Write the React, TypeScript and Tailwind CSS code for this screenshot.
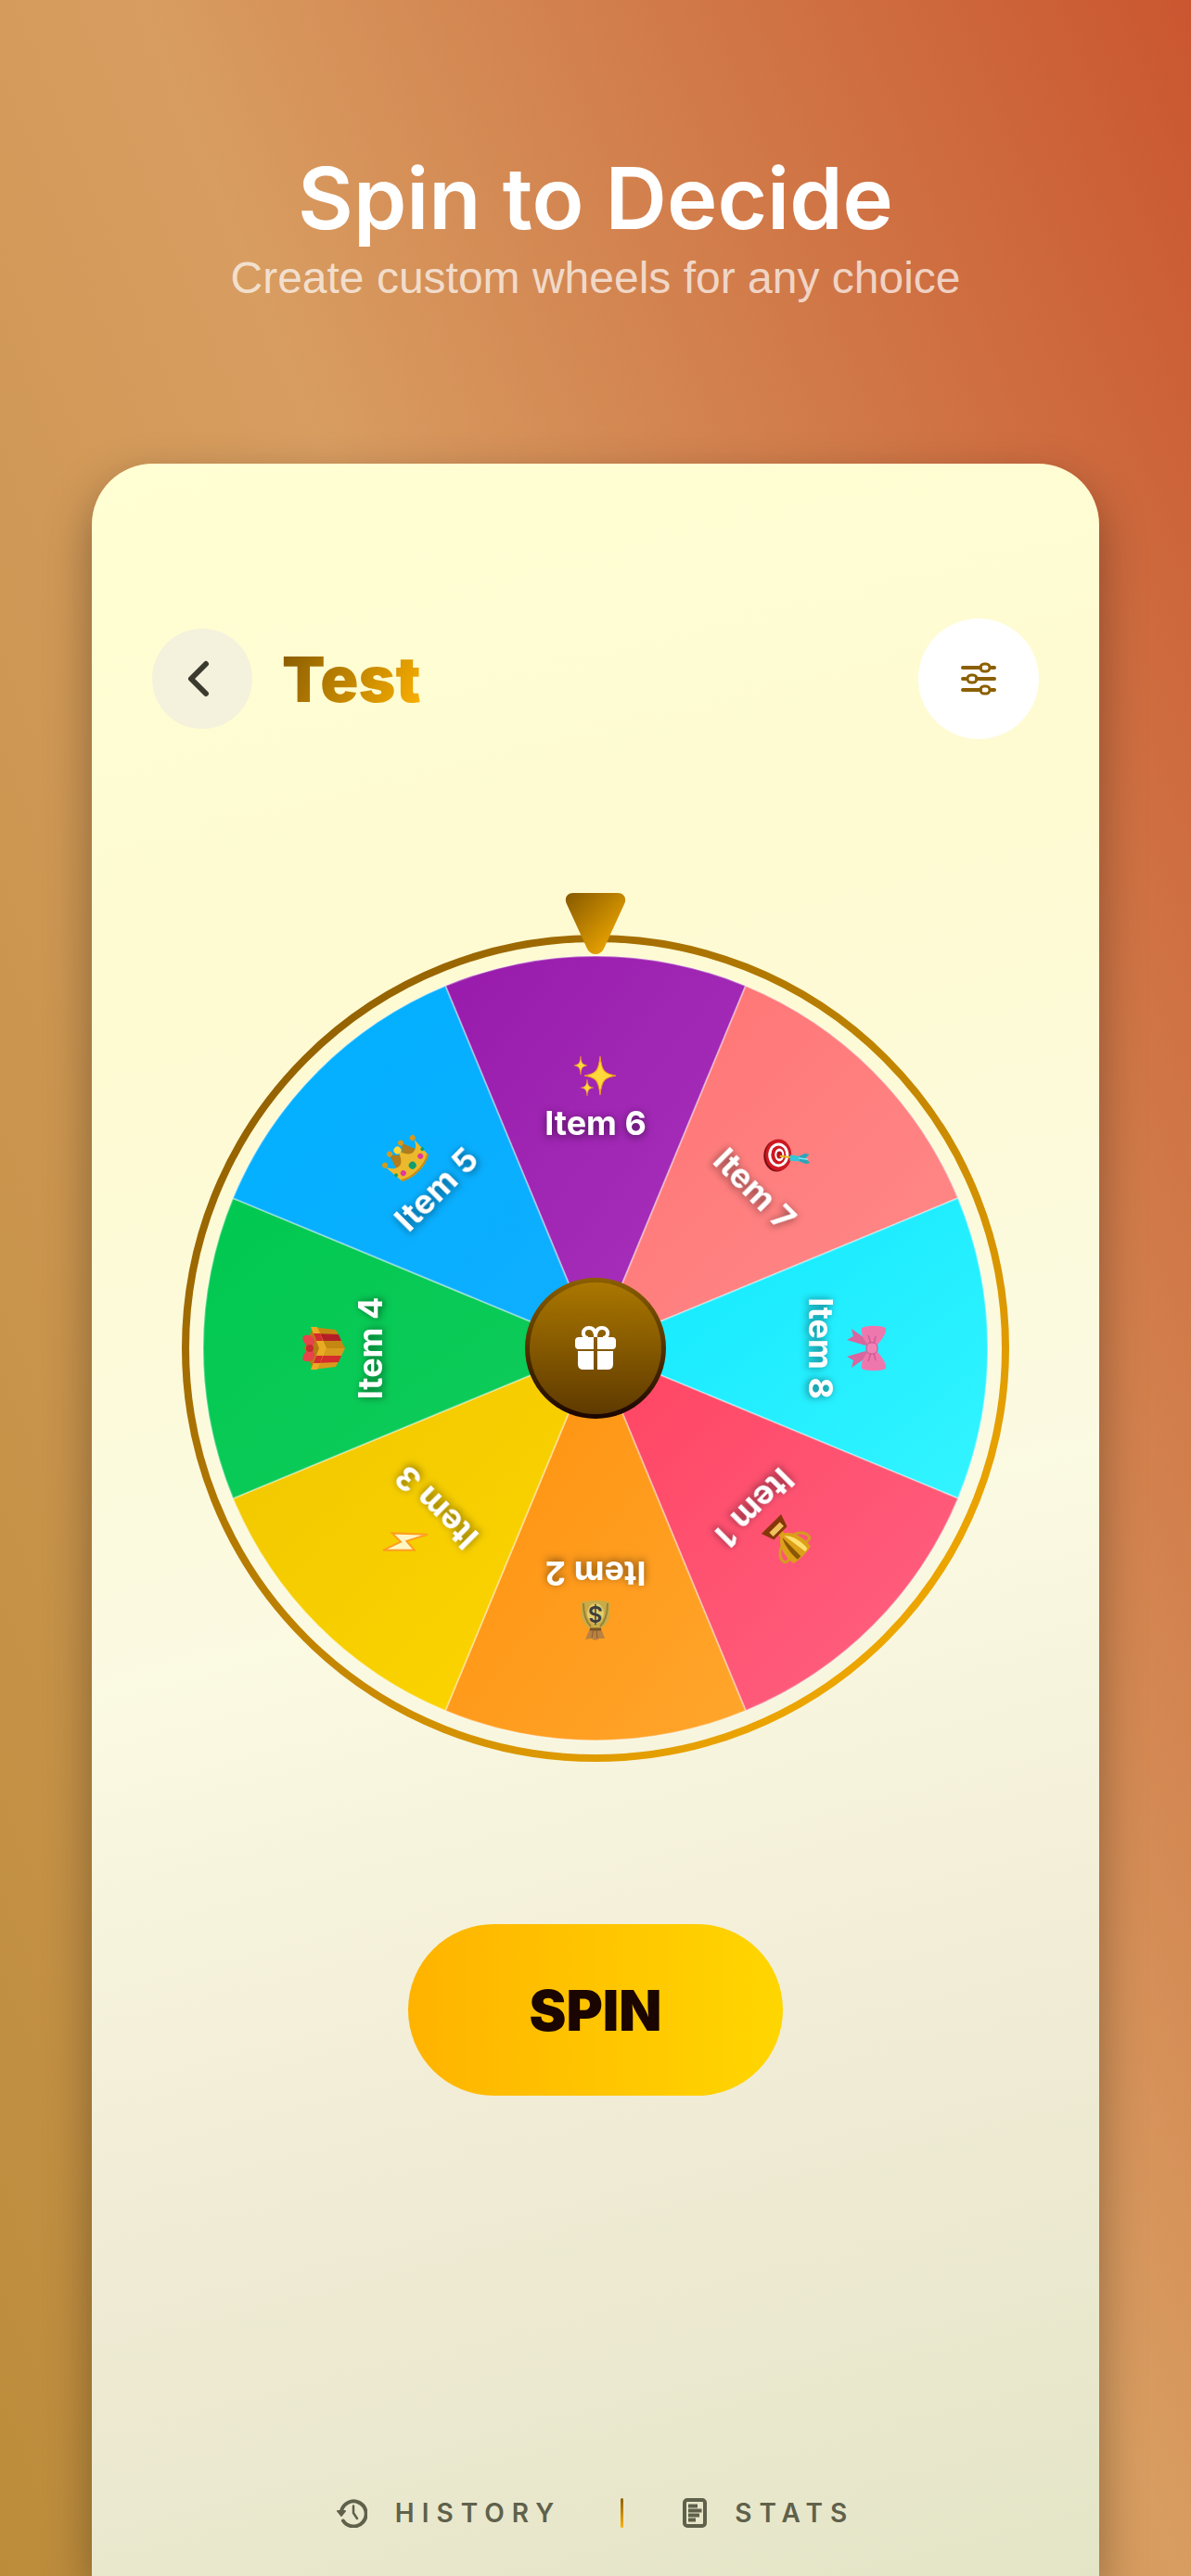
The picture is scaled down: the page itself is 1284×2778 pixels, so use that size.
import React from 'react';

type Segment = {
  label: string;
  from: string;
  to: string;
  icon: React.ReactNode;
};

const STAR = 'M0 -1 C0.1 -0.25 0.25 -0.1 1 0 C0.25 0.1 0.1 0.25 0 1 C-0.1 0.25 -0.25 0.1 -1 0 C-0.25 -0.1 -0.1 -0.25 0 -1 Z';

const Sparkles = () => (
  <g fill="#ffd93b" stroke="#f09a1e" strokeWidth="0.06">
    <path d={STAR} transform="translate(5 -1) scale(17 21)" />
    <path d={STAR} transform="translate(-16 -12) scale(7 10)" />
    <path d={STAR} transform="translate(-9 12) scale(7 9)" />
  </g>
);

const Target = () => (
  <g>
    <g transform="translate(-8 6) rotate(-45)">
      <ellipse cx="-2" cy="1" rx="14" ry="17" fill="#7d0f14" />
      <ellipse rx="14" ry="17" fill="#cf1820" />
      <ellipse rx="11" ry="13" fill="#fff" />
      <ellipse rx="8" ry="10" fill="#cf1820" />
      <ellipse cx="1" rx="5" ry="7" fill="#fff" />
      <ellipse cx="1" rx="3" ry="4" fill="#b3121a" />
    </g>
    <path d="M-6 6 L4 -2" stroke="#e8b21c" strokeWidth="2" />
    <path d="M1 -3 L5 2 L13 -5 L9 -9 Z" fill="#35c4d8" />
    <path d="M9 -9 L11 -15 L15 -18 L15 -12 L22 -12 L20 -8 L13 -5 Z" fill="#2aa5bb" />
    <path d="M10 -7 L18 -13" stroke="#83e6f0" strokeWidth="1.5" />
  </g>
);

const Bow = () => (
  <g>
    <path d="M-7 -3 L-21 17 L-13 15 L-9 22 L-3 2 Z" fill="#d9669e" />
    <path d="M7 -3 L21 17 L13 15 L9 22 L3 2 Z" fill="#d9669e" />
    <path d="M-4 -11 C-10 -16 -16 -21 -22 -20 C-25 -14 -25 0 -22 6 C-15 7 -9 4 -4 -1 Z" fill="#ee78ae" />
    <path d="M4 -11 C10 -16 16 -21 22 -20 C25 -14 25 0 22 6 C15 7 9 4 4 -1 Z" fill="#ee78ae" />
    <path d="M-5 -7 L-13 -9 M-5 -4 L-14 -1 M5 -7 L13 -9 M5 -4 L14 -1" stroke="#d05c95" strokeWidth="1.5" />
    <rect x="-6" y="-11" width="12" height="12" rx="5" fill="#f283b7" stroke="#c9548c" />
  </g>
);

const Trophy = () => (
  <g>
    <path d="M-11 -14 C-23 -21 -22 -4 -9 0 M11 -14 C23 -21 22 -4 9 0" fill="none" stroke="#d59b22" strokeWidth="3" />
    <path d="M-13 -22 C-7 -24 7 -24 13 -22 C15 -8 10 4 3 8 L3 12 H-3 L-3 8 C-10 4 -15 -8 -13 -22 Z" fill="#dca019" />
    <path d="M-9 -21 C-10 -8 -6 2 -1 6 L-5 -22 Z" fill="#ffe06d" />
    <path d="M2 -22 H7 C8 -9 5 1 2 6 Z" fill="#8b5702" />
    <path d="M-10 11 H10 L15 25 H-15 Z" fill="#863708" />
    <rect x="-8" y="14" width="16" height="6" fill="#eec15d" />
  </g>
);

const MoneyBag = () => (
  <g>
    <path d="M-10 -20 L-4 -20 L0 -22 L5 -20 L11 -21 L6 -9 H-6 Z" fill="#b98242" />
    <path d="M-2 -20 L-1 -9 M4 -19 L2 -9" stroke="#8e5d28" />
    <path d="M-6 -9 H6 C12 -5 15 -1 15 6 L16 18 C12 22 -12 22 -16 18 L-15 6 C-15 -1 -12 -5 -6 -9 Z" fill="#c9ac47" />
    <path d="M-5 -7 C-12 0 -13 9 -13 18 M5 -7 C12 0 13 9 13 18" fill="none" stroke="#9b8034" strokeWidth="2" />
    <ellipse cy="7" rx="9" ry="11" fill="#e2cd6c" />
    <path d="M-6 -10 H6" stroke="#7a5524" strokeWidth="3" />
    <text y="15" textAnchor="middle" fontSize="24" fontWeight="600" fill="#403c3c">$</text>
  </g>
);

const Bolt = () => (
  <path d="M-14 23 L14 -3 L1 -3 L8 -23 L-16 1 L-3 2 Z" fill="#fff6c4" stroke="#ff9d1e" strokeWidth="2" />
);

const GiftBox = () => (
  <g>
    <path d="M-22 -12 L0 -21 L22 -12 L0 -3 Z" fill="#b87a14" />
    <path d="M-23 -13 L0 -4 V23 L-20 13 Z" fill="#d89a1c" />
    <path d="M23 -13 L0 -4 V23 L20 13 Z" fill="#c48812" />
    <path d="M-16 -10 L-8 -7 V19 L-15 16 Z" fill="#d52a2e" />
    <path d="M16 -10 L8 -7 V19 L15 16 Z" fill="#b41f27" />
    <path d="M-23 -14 L0 -5 L23 -14 V-7 L0 3 L-23 -7 Z" fill="#e9ab23" />
    <path d="M-16 -11 L-8 -8 V-1 L-16 -4 Z M16 -11 L8 -8 V-1 L16 -4 Z" fill="#d52a2e" />
    <path d="M0 -15 C-6 -23 -13 -25 -14 -20 C-15 -13 -11 -9 -6 -10 L0 -13 L6 -10 C11 -9 15 -13 14 -20 C13 -25 6 -23 0 -15 Z" fill="#e6434a" />
    <circle cy="-15" r="4" fill="#c92932" />
  </g>
);

const Crown = () => (
  <g>
    <path d="M-17 10 L-10 -11 L0 -2 L9 -11 L17 10 Z" fill="#b07c1c" />
    <path d="M-20 18 L-22 -5 C-19 2 -13 6 -8 4 C-4 2 -2 -3 0 -8 C2 -3 4 2 8 4 C13 6 19 2 21 -5 L20 18 C10 25 -10 25 -20 18 Z" fill="#ecb92c" />
    <path d="M-20 17 C-10 24 10 24 20 17" fill="none" stroke="#c48b18" strokeWidth="2" />
    <g fill="#d49a1f">
      <circle cx="-21" cy="-7" r="3" />
      <circle cx="-9" cy="-12" r="3" />
      <circle cx="8" cy="-12" r="3" />
      <circle cx="21" cy="-7" r="3" />
    </g>
    <circle cy="-9" r="4" fill="#ffd836" />
    <circle cy="14" r="4" fill="#109f6c" />
    <circle cx="-13" cy="13" r="3" fill="#e0389f" />
    <circle cx="13" cy="13" r="3" fill="#e0389f" />
    <circle cx="-20" cy="9" r="2" fill="#109f6c" />
    <circle cx="20" cy="9" r="2" fill="#109f6c" />
  </g>
);

// Clockwise, starting with the segment under the pointer
const SEGMENTS: Segment[] = [
  { label: 'Item 6', from: '#981bab', to: '#a933be', icon: <Sparkles /> },
  { label: 'Item 7', from: '#ff7373', to: '#ff8a8a', icon: <Target /> },
  { label: 'Item 8', from: '#10e8ff', to: '#33f4ff', icon: <Bow /> },
  { label: 'Item 1', from: '#ff4462', to: '#ff6282', icon: <Trophy /> },
  { label: 'Item 2', from: '#ff900c', to: '#ffa62c', icon: <MoneyBag /> },
  { label: 'Item 3', from: '#f0c600', to: '#fdd600', icon: <Bolt /> },
  { label: 'Item 4', from: '#00c850', to: '#12cc5c', icon: <GiftBox /> },
  { label: 'Item 5', from: '#00b0ff', to: '#10aeff', icon: <Crown /> },
];

const RADIUS = 423;
const STEP = 360 / SEGMENTS.length;

const point = (deg: number) => {
  const rad = ((deg - 90) * Math.PI) / 180;
  return `${(RADIUS * Math.cos(rad)).toFixed(2)} ${(RADIUS * Math.sin(rad)).toFixed(2)}`;
};

const Wheel: React.FC = () => (
  <svg viewBox="-446 -491 892 937" className="block w-full font-['Inter',sans-serif]" role="img" aria-label="Prize wheel">
    <defs>
      <linearGradient id="ring" x1="0" y1="0" x2="1" y2="1">
        <stop offset="0" stopColor="#835500" />
        <stop offset="1" stopColor="#ffb300" />
      </linearGradient>
      <linearGradient id="pointer" x1="0" y1="0" x2="1" y2="1">
        <stop offset="0" stopColor="#855900" />
        <stop offset="1" stopColor="#ffb300" />
      </linearGradient>
      <linearGradient id="hub" x1="0" y1="0" x2="0" y2="1">
        <stop offset="0" stopColor="#aa7700" />
        <stop offset="1" stopColor="#5f3a00" />
      </linearGradient>
      <linearGradient id="hubEdge" x1="0" y1="0" x2="0" y2="1">
        <stop offset="0" stopColor="#8b5f00" />
        <stop offset="1" stopColor="#1a0500" />
      </linearGradient>
      {SEGMENTS.map((s, i) => (
        <linearGradient key={s.label} id={`seg${i}`} x1="0" y1="0" x2="1" y2="1">
          <stop offset="0" stopColor={s.from} />
          <stop offset="1" stopColor={s.to} />
        </linearGradient>
      ))}
    </defs>

    <circle r="442" fill="none" stroke="url(#ring)" strokeWidth="8" />

    {SEGMENTS.map((s, i) => (
      <path
        key={s.label}
        d={`M0 0 L${point(i * STEP - STEP / 2)} A${RADIUS} ${RADIUS} 0 0 1 ${point(i * STEP + STEP / 2)} Z`}
        fill={`url(#seg${i})`}
        stroke="#ffffff"
        strokeOpacity="0.35"
        strokeWidth="2"
      />
    ))}

    {SEGMENTS.map((s, i) => (
      <g key={s.label} transform={`rotate(${i * STEP})`}>
        <g transform="translate(0 -293)">{s.icon}</g>
        <text
          y="-230"
          textAnchor="middle"
          fontSize="36"
          fontWeight="700"
          fill="#fff"
          className="drop-shadow-[0_2px_4px_rgba(0,0,0,0.5)]"
        >
          {s.label}
        </text>
      </g>
    ))}

    <circle r="76" fill="url(#hubEdge)" />
    <circle r="71" fill="url(#hub)" />
    <g fill="#fff">
      <path d="M-2 -12 H-18 Q-22 -12 -22 -8 V-3 Q-22 1 -18 1 H-2 Z" />
      <path d="M2 -12 H18 Q22 -12 22 -8 V-3 Q22 1 18 1 H2 Z" />
      <path d="M-2 3 H-19 V17 Q-19 23 -13 23 H-2 Z" />
      <path d="M2 3 H19 V17 Q19 23 13 23 H2 Z" />
    </g>
    <path
      d="M0 -12 C0 -19 -3 -22 -7 -22 C-15 -22 -15 -11 -8 -11 M0 -12 C0 -19 3 -22 7 -22 C15 -22 15 -11 8 -11"
      fill="none"
      stroke="#fff"
      strokeWidth="4"
    />

    <path
      d="M-24 -491 H24 C31 -491 34 -485 31 -479 L9 -431 C5 -423 -5 -423 -9 -431 L-31 -479 C-34 -485 -31 -491 -24 -491 Z"
      fill="url(#pointer)"
    />
  </svg>
);

const SlidersIcon = () => (
  <svg viewBox="-20 -20 40 40" className="size-10" fill="none" stroke="#8b5f00" strokeLinecap="round" aria-hidden="true">
    <path d="M-17 -12 H2 M14 -12 H17 M-17 0 H-14 M-2 0 H17 M-17 12 H2 M14 12 H17" strokeWidth="4" />
    <g strokeWidth="3">
      <rect x="2" y="-16" width="10" height="8" rx="4" />
      <rect x="-12" y="-4" width="10" height="8" rx="4" />
      <rect x="2" y="8" width="10" height="8" rx="4" />
    </g>
  </svg>
);

const HistoryIcon = () => (
  <svg viewBox="0 0 33 32" className="h-8 w-[33px]" fill="none" stroke="currentColor" strokeLinecap="round" strokeLinejoin="round" aria-hidden="true">
    <path d="M5 14 A13.5 13.5 0 1 1 7 24.5" strokeWidth="4" />
    <path d="M1 14 H9 L5 19 Z" fill="currentColor" strokeWidth="2" />
    <path d="M18 8.5 V16 L22 22" strokeWidth="2.5" />
  </svg>
);

const StatsIcon = () => (
  <svg viewBox="0 0 26 32" className="h-8 w-[26px]" fill="none" stroke="currentColor" aria-hidden="true">
    <rect x="2" y="2" width="22" height="28" rx="3" strokeWidth="4" />
    <path d="M6 8.5 H16 M6 13.5 H20.5 M6 18.5 H18 M6 23.5 H14" strokeWidth="4" />
  </svg>
);

export default function App() {
  return (
    <div className="min-h-screen flex flex-col bg-[linear-gradient(68deg,#bc8c3a,#d89d61_53%,#ca5630)] font-['Inter',sans-serif]">
      {/* Headline */}
      <header className="pt-[164px] text-center">
        <h1 className="text-[92px] leading-[100px] font-semibold text-white">Spin to Decide</h1>
        <p className="mt-2 font-['Liberation_Sans',sans-serif] text-[48px] leading-[56px] text-white/70">Create custom wheels for any choice</p>
      </header>

      {/* App screen */}
      <main className="mt-[172px] mx-[99px] flex-1 flex flex-col px-[65px] pt-[167px] pb-[52px] rounded-t-[66px] bg-[linear-gradient(166deg,#ffffd3,#fefad2_25%,#fbfae2_52%,#f1ecd6_74%,#e4e5c7)] shadow-[0_20px_50px_rgba(0,0,0,0.35)]">
        <div className="flex items-center justify-between">
          <div className="flex items-center gap-8">
            <button aria-label="Back" className="size-[108px] rounded-full bg-[#f4f1dc] flex items-center justify-center">
              <svg viewBox="0 0 32 44" className="h-11 w-8" fill="none" stroke="#3a3a2e" strokeWidth="6" strokeLinecap="round" strokeLinejoin="round" aria-hidden="true">
                <path d="M20 6 L4 22 L20 38" />
              </svg>
            </button>
            <h2 className="text-[68px] leading-20 font-black text-transparent bg-clip-text bg-[linear-gradient(120deg,#855900,#ffb300)]">Test</h2>
          </div>
          <button aria-label="Wheel settings" className="size-[130px] rounded-full bg-white flex items-center justify-center">
            <SlidersIcon />
          </button>
        </div>

        <div className="mt-[166px] px-8">
          <Wheel />
        </div>

        <button className="mt-[175px] self-center h-[185px] w-[404px] rounded-full bg-linear-to-r from-[#ffb300] to-[#ffd600] text-[60px] font-black text-[#1a0500]">
          SPIN
        </button>

        <nav className="mt-auto flex items-center justify-center gap-16 text-[28px] leading-8 font-semibold text-[#5f614b]">
          <button className="flex items-center gap-[30px]">
            <HistoryIcon />
            <span className="tracking-[8px]">HISTORY</span>
          </button>
          <span className="h-8 w-[3px] rounded-full bg-linear-to-b from-[#8b5f00] to-[#ffb300]" />
          <button className="flex items-center gap-[30px]">
            <StatsIcon />
            <span className="tracking-[8px]">STATS</span>
          </button>
        </nav>
      </main>
    </div>
  );
}
